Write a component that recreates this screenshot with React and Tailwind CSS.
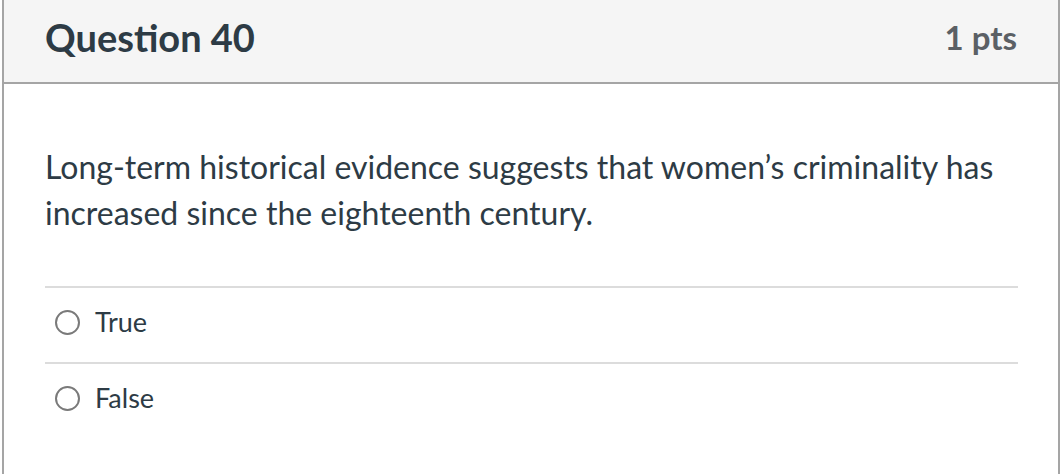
export default function App() {
  const answers = ['True', 'False'];

  return (
    <div className="w-[1060px] h-[474px] bg-white overflow-hidden" style={{ fontFamily: 'Lato, "Open Sans", sans-serif' }}>
      <div className="ml-[2px] w-[1058px] h-full border-x-2 border-[#a5a5a5] flex flex-col">
        {/* header */}
        <div className="h-[84px] shrink-0 bg-[#f5f5f5] border-b-2 border-[#a5a5a5] flex items-center justify-between pl-[41px] pr-[41px] pb-[8px]">
          <h2 className="text-[38px] font-bold text-[#2d3b45] leading-none">Question 40</h2>
          <span className="text-[33px] font-bold text-[#5b6065] leading-none">1 pts</span>
        </div>

        {/* body */}
        <div className="px-[41px] pt-[60px]">
          <p className="text-[32px] leading-[46px] text-[#2d3b45]">
            Long-term historical evidence suggests that women’s criminality has increased since the eighteenth century.
          </p>

          <div className="mt-[50px] mr-[-1px]">
            {answers.map((a) => (
              <div key={a} className="border-t-2 border-[#dcdcdc] h-[76px] flex items-center gap-[15px] pl-[10px] pb-[5px]">
                <span className="w-[25px] h-[25px] rounded-full border-2 border-[#7a7a7a] shrink-0" />
                <span className="text-[27px] text-[#2d3b45]">{a}</span>
              </div>
            ))}
          </div>
        </div>
      </div>
    </div>
  );
}
